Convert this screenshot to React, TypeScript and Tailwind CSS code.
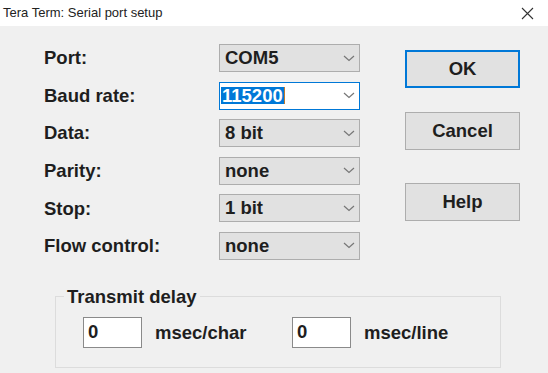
import React from "react";

const rows = [
  { label: "Port:", value: "COM5" },
  { label: "Baud rate:", value: "115200", focused: true },
  { label: "Data:", value: "8 bit" },
  { label: "Parity:", value: "none" },
  { label: "Stop:", value: "1 bit" },
  { label: "Flow control:", value: "none" },
];

function Chevron() {
  return (
    <svg width="12" height="7" viewBox="0 0 12 7" className="shrink-0">
      <path d="M1 1 L6 5.5 L11 1" fill="none" stroke="#777" strokeWidth="1.2" />
    </svg>
  );
}

function Select({ value, focused }: { value: string; focused?: boolean }) {
  if (focused) {
    return (
      <div className="w-[141px] h-[28px] bg-white border border-[#0078d7] flex items-center justify-between pl-[1px] pr-[4px]">
        <div className="flex items-center">
          <span className="bg-[#0078d7] text-white leading-[17px] px-[1px]">{value}</span>
          <span className="w-[1px] h-[17px] bg-[#c07a30]" />
        </div>
        <Chevron />
      </div>
    );
  }
  return (
    <div className="w-[141px] h-[28px] bg-[#e1e1e1] border border-[#adadad] flex items-center justify-between pl-[5px] pr-[4px]">
      <span className="leading-none">{value}</span>
      <Chevron />
    </div>
  );
}

function Button({ children, primary }: { children: React.ReactNode; primary?: boolean }) {
  return (
    <button
      className={
        primary
          ? "w-[115px] h-[38px] bg-[#e1e1e1] border-2 border-[#0078d7] flex items-center justify-center"
          : "w-[115px] h-[38px] bg-[#e1e1e1] border border-[#adadad] flex items-center justify-center"
      }
    >
      {children}
    </button>
  );
}

export default function App() {
  return (
    <div className="w-[548px] h-[373px] bg-[#f0f0f0] flex flex-col overflow-hidden font-['Liberation_Sans',Arial,sans-serif] text-[18.5px] font-bold text-[#1e1e1e]">
      {/* Title bar */}
      <div className="h-[26px] bg-white flex items-center justify-between pl-[3px] pr-[14px] shrink-0">
        <span className="text-[13px] font-normal text-[#222]">Tera Term: Serial port setup</span>
        <svg width="13" height="13" viewBox="0 0 13 13">
          <path d="M1 1 L12 12 M12 1 L1 12" stroke="#333" strokeWidth="1.1" />
        </svg>
      </div>

      {/* Body */}
      <div className="flex pl-[44px] pt-[18px]">
        <div className="flex flex-col gap-[9.6px]">
          {rows.map((r) => (
            <div key={r.label} className="flex items-center h-[28px]">
              <span className="w-[175px]">{r.label}</span>
              <Select value={r.value} focused={r.focused} />
            </div>
          ))}
        </div>
        <div className="flex flex-col ml-[45px] mt-[6px]">
          <Button primary>OK</Button>
          <div className="mt-[24px]">
            <Button>Cancel</Button>
          </div>
          <div className="mt-[33px]">
            <Button>Help</Button>
          </div>
        </div>
      </div>

      {/* Transmit delay */}
      <fieldset className="ml-[55px] mt-[27px] w-[446px] border border-[#dcdcdc] pb-[19px]">
        <legend className="ml-[8px] px-[3px] leading-[20px]">Transmit delay</legend>
        <div className="flex items-center mt-[10px] pl-[27px]">
          <div className="w-[59px] h-[31px] bg-white border border-[#8a8a8a] pl-[4px] pt-[5px] leading-none">0</div>
          <span className="ml-[13px] w-[137px]">msec/char</span>
          <div className="w-[59px] h-[31px] bg-white border border-[#8a8a8a] pl-[4px] pt-[5px] leading-none">0</div>
          <span className="ml-[13px]">msec/line</span>
        </div>
      </fieldset>
    </div>
  );
}
